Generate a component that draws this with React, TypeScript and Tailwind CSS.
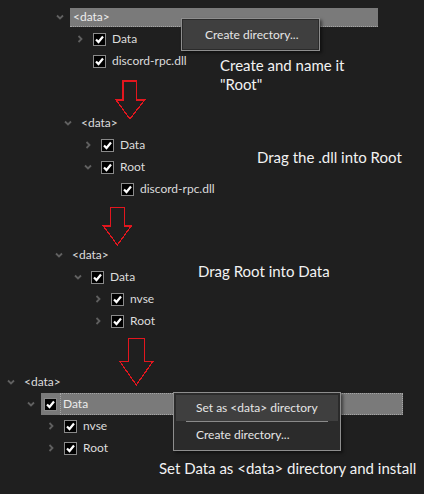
import type { ReactNode } from 'react';

const font = { fontFamily: 'Lato, "Open Sans", sans-serif' };

function Chevron({ dir }: { dir: 'down' | 'right' | 'none' }) {
  if (dir === 'none') return <span className="w-[8px] h-[8px] shrink-0" />;
  return (
    <svg width="8" height="8" viewBox="0 0 8 8" className="shrink-0">
      <path
        d={dir === 'down' ? 'M1 2.5 L4 5.5 L7 2.5' : 'M2.5 1 L5.5 4 L2.5 7'}
        fill="none"
        stroke="#606060"
        strokeWidth="1.8"
      />
    </svg>
  );
}

function Check() {
  return (
    <span className="flex h-[13px] w-[13px] shrink-0 items-center justify-center border border-[#8a8a8a] bg-black">
      <svg width="11" height="11" viewBox="0 0 11 11">
        <path d="M2 5.5 L4.5 8 L9 2.5" fill="none" stroke="#fff" strokeWidth="2.2" />
      </svg>
    </span>
  );
}

// a tree item: chevron slot, optional checkbox, label
function Item({ dir, check, label }: { dir: 'down' | 'right' | 'none'; check?: boolean; label: string }) {
  return (
    <div className="flex items-center">
      <Chevron dir={dir} />
      {check ? (
        <>
          <span className="ml-[9px]"><Check /></span>
          <span className="ml-[6px] whitespace-nowrap">{label}</span>
        </>
      ) : (
        <span className="ml-[9px] whitespace-nowrap">{label}</span>
      )}
    </div>
  );
}

function Arrow({ w, h, pts }: { w: number; h: number; pts: string }) {
  return (
    <svg width={w} height={h} viewBox={`0 0 ${w} ${h}`} shapeRendering="crispEdges">
      <polygon points={pts} fill="none" stroke="#e3161e" strokeWidth="1.2" />
    </svg>
  );
}

function Note({ children }: { children: ReactNode }) {
  return <div className="text-[15px] leading-[19px] text-[#f2f2f2] whitespace-nowrap">{children}</div>;
}

export default function App() {
  return (
    <div className="w-[424px] h-[494px] overflow-hidden bg-[#1f1f1f] text-[12px] text-[#dcdcdc]" style={font}>
      {/* step 1 */}
      <div className="relative pt-[6px]">
        <div className="flex h-[22px] items-center pl-[56px]">
          <Chevron dir="down" />
          <div className="ml-[6px] flex h-[19px] w-[308px] items-center bg-[#7a7a7a] pl-[3px] border-b border-dotted border-[#a5a5a5]">
            <span className="text-[#ececec]">&lt;data&gt;</span>
          </div>
        </div>
        <div className="flex h-[22px] items-center pl-[76px]">
          <Item dir="right" check label="Data" />
        </div>
        <div className="grid h-[22px] grid-cols-[220px_1fr]">
          <div className="flex h-[22px] items-center pl-[76px]">
            <Item dir="none" check label="discord-rpc.dll" />
          </div>
          <div className="mt-[6px]">
            <Note>Create and name it<br />"Root"</Note>
          </div>
        </div>

        <div className="absolute left-[181px] top-[18px] w-[139px] border border-[#8e8e8e] bg-[#2b2b2b] p-[1px] shadow-[2px_2px_3px_rgba(0,0,0,0.5)]">
          <div className="flex h-[29px] items-center bg-[#3f3f3f] pl-[22px] text-[#e6e6e6]">Create directory...</div>
        </div>
      </div>

      <div className="ml-[115px] mt-[8px] mb-[-9px] h-[41px]">
        <Arrow w={32} h={41} pts="8,1 21.5,1 21.5,20 29.5,20 15,39 1,20 8,20" />
      </div>

      {/* step 2 */}
      <div>
        <div className="flex h-[22px] items-center pl-[64px]">
          <Item dir="down" label="<data>" />
        </div>
        <div className="grid h-[22px] grid-cols-[257px_1fr]">
          <div className="flex h-[22px] items-center pl-[84px]">
            <Item dir="right" check label="Data" />
          </div>
          <div className="mt-[14px]">
            <Note>Drag the .dll into Root</Note>
          </div>
        </div>
        <div className="flex h-[22px] items-center pl-[84px]">
          <Item dir="down" check label="Root" />
        </div>
        <div className="flex h-[22px] items-center pl-[104px]">
          <Item dir="none" check label="discord-rpc.dll" />
        </div>
      </div>

      <div className="ml-[102px] mt-[7px] mb-[-3px] h-[40px]">
        <Arrow w={31} h={40} pts="8.3,0.5 22.3,0.5 22.3,19 29.3,19 15.3,38 1.3,19 8.3,19" />
      </div>

      {/* step 3 */}
      <div>
        <div className="grid h-[22px] grid-cols-[198px_1fr]">
          <div className="flex h-[22px] items-center pl-[55px]">
            <Item dir="down" label="<data>" />
          </div>
          <div className="mt-[18px]">
            <Note>Drag Root into Data</Note>
          </div>
        </div>
        <div className="flex h-[22px] items-center pl-[74px]">
          <Item dir="down" check label="Data" />
        </div>
        <div className="flex h-[22px] items-center pl-[94px]">
          <Item dir="right" check label="nvse" />
        </div>
        <div className="flex h-[22px] items-center pl-[94px]">
          <Item dir="right" check label="Root" />
        </div>
      </div>

      <div className="ml-[119px] mt-[6px] mb-[-15px] h-[48px]">
        <Arrow w={35} h={48} pts="9.3,0.5 25.7,0.5 25.7,23.7 33.7,23.7 17.3,47 1,23.7 9.3,23.7" />
      </div>

      {/* step 4 */}
      <div className="relative">
        <div className="flex h-[22px] items-center pl-[7px]">
          <Item dir="down" label="<data>" />
        </div>
        <div className="flex h-[22px] items-center pl-[27px]">
          <Chevron dir="down" />
          <div className="ml-[6px] flex h-[22px] w-[362px] items-center bg-[#7a7a7a] pl-[3px]">
            <Check />
            <span className="ml-[3px] flex h-[22px] flex-1 items-center border border-dotted border-[#a5a5a5] pl-[2px] text-[#ececec]">Data</span>
          </div>
        </div>
        <div className="flex h-[22px] items-center pl-[47px]">
          <Item dir="right" check label="nvse" />
        </div>
        <div className="flex h-[22px] items-center pl-[47px]">
          <Item dir="right" check label="Root" />
        </div>

        <div className="absolute left-[173px] top-[21px] w-[168px] border border-[#8e8e8e] bg-[#2b2b2b] p-[2px] shadow-[2px_2px_3px_rgba(0,0,0,0.5)]">
          <div className="flex h-[26px] items-center bg-[#3f3f3f] pl-[20px] text-[#e6e6e6]">Set as &lt;data&gt; directory</div>
          <div className="mx-[10px] h-px bg-[#8a8a8a]" />
          <div className="flex h-[26px] items-center pl-[20px] text-[#e6e6e6]">Create directory...</div>
        </div>
      </div>

      <div className="ml-[159px]">
        <Note>Set Data as &lt;data&gt; directory and install</Note>
      </div>
    </div>
  );
}
